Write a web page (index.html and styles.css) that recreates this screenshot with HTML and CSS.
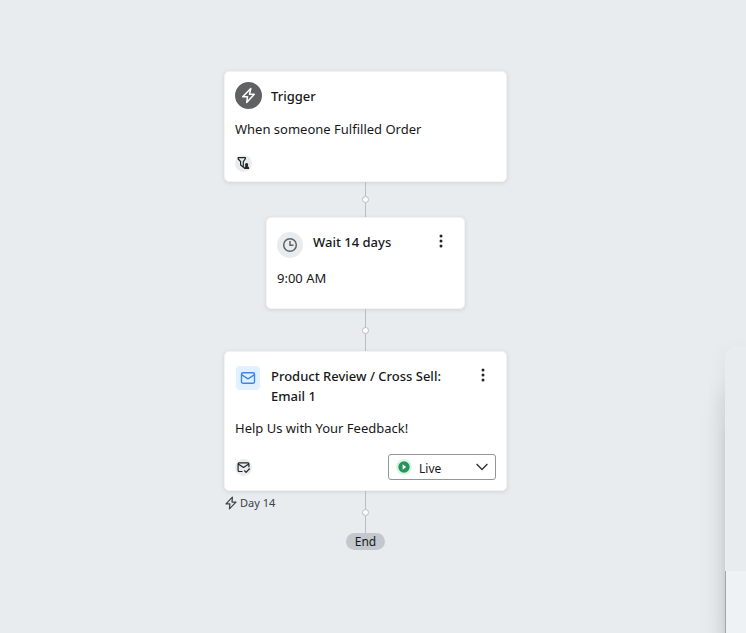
FILE: index.html
```html
<!DOCTYPE html>
<html lang="en">
<head>
<meta charset="utf-8">
<title>Flow</title>
<link rel="stylesheet" href="styles.css">
</head>
<body>
<main class="flow">

	<section class="card trigger">
		<div class="card-head">
			<span class="icon icon-dark">
				<svg width="18" height="18" viewBox="0 0 18 18" fill="none" stroke="#fff" stroke-width="1.5" stroke-linejoin="round"><path d="M10.8 1.5 2.7 9.7H7.5L6.7 15.5 14.3 7.3H9.5z"/></svg>
			</span>
			<h2>Trigger</h2>
		</div>
		<p class="text">When someone Fulfilled Order</p>
		<div class="card-foot">
			<span class="badge">
				<svg width="16" height="16" viewBox="0 0 16 16"><path d="M3.2 2.7h7.1v1.2L8.3 6.6v5.6L5.6 10V6.6L3.2 3.9z" fill="none" stroke="#232426" stroke-width="1.2"/><circle cx="11.6" cy="9.7" r="1.6" fill="#232426"/><path d="M9.1 14v-1.2c0-.9.8-1.2 1.5-1.5v-1h2v1c.7.3 1.5.6 1.5 1.5V14z" fill="#232426"/></svg>
			</span>
		</div>
	</section>

	<div class="connector short"><i class="dot"></i></div>

	<section class="card wait">
		<div class="card-head">
			<span class="icon icon-light">
				<svg width="16" height="16" viewBox="0 0 16 16" fill="none" stroke="#606265" stroke-width="1.5"><circle cx="8" cy="8" r="6.3"/><path d="M8 4v4.2h3.5"/></svg>
			</span>
			<h2>Wait 14 days</h2>
			<button class="more" type="button" aria-label="More options">
				<svg width="4" height="14" viewBox="0 0 4 14" fill="#232426"><circle cx="2" cy="2" r="1.5"/><circle cx="2" cy="7" r="1.5"/><circle cx="2" cy="12" r="1.5"/></svg>
			</button>
		</div>
		<p class="text">9:00 AM</p>
	</section>

	<div class="connector"><i class="dot"></i></div>

	<section class="card email">
		<div class="card-head">
			<span class="icon icon-blue">
				<svg width="16" height="16" viewBox="0 0 16 16" fill="none" stroke="#4285ea" stroke-width="1.4" stroke-linejoin="round"><rect x="1.5" y="2.7" width="13" height="10.6" rx="1.6"/><path d="m1.8 4.8 6.2 4 6.2-4"/></svg>
			</span>
			<h2>Product Review / Cross Sell: Email 1</h2>
			<button class="more" type="button" aria-label="More options">
				<svg width="4" height="14" viewBox="0 0 4 14" fill="#232426"><circle cx="2" cy="2" r="1.5"/><circle cx="2" cy="7" r="1.5"/><circle cx="2" cy="12" r="1.5"/></svg>
			</button>
		</div>
		<p class="text">Help Us with Your Feedback!</p>
		<div class="card-foot">
			<span class="badge">
				<svg width="16" height="16" viewBox="0 0 16 16" fill="none" stroke="#232426" stroke-width="1.2" stroke-linejoin="round"><path d="M7.5 12.5H4.1a1 1 0 0 1-1-1V4.9a1 1 0 0 1 1-1h8.8a1 1 0 0 1 1 1v3.4M3.3 5.1l5.2 3.4 5.2-3.4M9.3 11.5l1.8 1.8 3.6-3.8"/></svg>
			</span>
			<div class="status">
				<svg class="play" width="16" height="16" viewBox="0 0 16 16"><circle cx="8" cy="8" r="8" fill="#d8f8e0"/><circle cx="8" cy="8" r="5.7" fill="#27935f"/><path d="M6.6 5.2 10.2 8l-3.6 2.8z" fill="#fff"/></svg>
				<select aria-label="Status">
					<option>Live</option>
					<option>Manual</option>
					<option>Draft</option>
				</select>
				<svg class="arrow" width="12" height="8" viewBox="0 0 12 8" fill="none" stroke="#333" stroke-width="1.4"><path d="m.6 1 5.4 5.4L11.4 1"/></svg>
			</div>
		</div>
	</section>

	<div class="connector">
		<span class="day">
			<svg width="12" height="14" viewBox="0 0 12 14" fill="none" stroke="#3c4045" stroke-width="1.2" stroke-linejoin="round"><path d="M7.4 1.2 1 7.9h3.9L4.4 12.8 11 6.1H7z"/></svg>
			Day 14
		</span>
		<i class="dot"></i>
	</div>

	<div class="end">End</div>

</main>
<aside class="panel"><div class="panel-top"></div></aside>
</body>
</html>
```

FILE: styles.css
```css
*{box-sizing:border-box;}
body,h2,p{margin:0;padding:0;}
html,body{height:100%;}
body{position:relative;overflow:hidden;background:#e8ecef;color:#17181a;font:13px/20px "Noto Sans","Open Sans",sans-serif;}
.flow{display:flex;flex-direction:column;align-items:center;padding:71px 15px 0 0;}

/* cards */
.card{display:flex;flex-direction:column;width:283px;padding:10px;border:1px solid #f1f3f5;border-radius:5px;background:#fff;box-shadow:0 1px 4px rgba(35,36,38,.12);}
.trigger{height:111px;}
.wait{width:199px;height:92px;}
.email{height:140px;}
.card-head{display:flex;align-items:flex-start;gap:10px;}
.card h2{flex:1;padding-top:4px;font-size:13px;line-height:20px;font-weight:500;}
.text{margin-top:10px;}
.card-foot{display:flex;align-items:center;justify-content:space-between;margin-top:auto;}
.trigger .card-foot{margin-bottom:-1px;}
.wait .card-head{padding-top:3px;}
.wait h2{padding-top:1px;}
.email .text{margin-top:12px;}

.icon{display:flex;align-items:center;justify-content:center;width:26px;height:27px;border-radius:50%;}
.icon-dark{width:27px;margin-right:-1px;background:#606163;}
.icon-light{height:26px;margin-top:1px;background:#e8ecef;}
.icon-blue{width:24px;height:24px;margin:4px 1px 0;border-radius:4px;background:#e0f1ff;}
.badge{display:flex;width:17px;height:17px;border-radius:50%;background:#e8ecef;}
.more{display:flex;justify-content:center;width:24px;padding:6px 0;margin-right:1px;border:0;background:none;}
.wait .more{padding:3px 0;}

/* status drop-down */
.status{position:relative;width:108px;}
.status select{display:block;width:100%;height:26px;padding:3px 30px 0;border:1px solid #949596;border-radius:3px;background:#fff;color:#17181a;font:12px/22px "Noto Sans","Open Sans",sans-serif;appearance:none;}
.play{position:absolute;left:8px;top:5px;}
.arrow{position:absolute;right:8px;top:9px;pointer-events:none;}

/* lines between cards */
.connector{display:grid;grid-template-columns:1fr 7px 1fr;align-items:center;width:283px;height:42px;background:linear-gradient(#b9bec3,#b9bec3) center/1px 100% no-repeat;}
.short{height:35px;}
.dot{grid-column:2;width:7px;height:7px;border:1px solid #b9bec3;border-radius:50%;background:#fff;}
.day{display:flex;align-items:center;align-self:start;gap:3px;padding:2px 0 0 1px;color:#3c4045;font-size:11px;}
.end{padding:0 9px;border-radius:9px;background:#c2c8ce;font-size:12px;line-height:17px;}

/* side panel */
.panel{position:absolute;top:346px;right:0;bottom:0;width:21px;border-radius:12px 0 0 0;background:#eef2f5;box-shadow:0 44px 26px rgba(0,0,0,.12),0 80px 12px rgba(0,0,0,.05),0 4px 20px rgba(0,0,0,.06);}
.panel::after{content:"";position:absolute;top:225px;bottom:0;left:0;width:1px;background:#a2a4a6;}
.panel-top{height:225px;border-radius:12px 0 0 0;background:#e8ecef;}
```
